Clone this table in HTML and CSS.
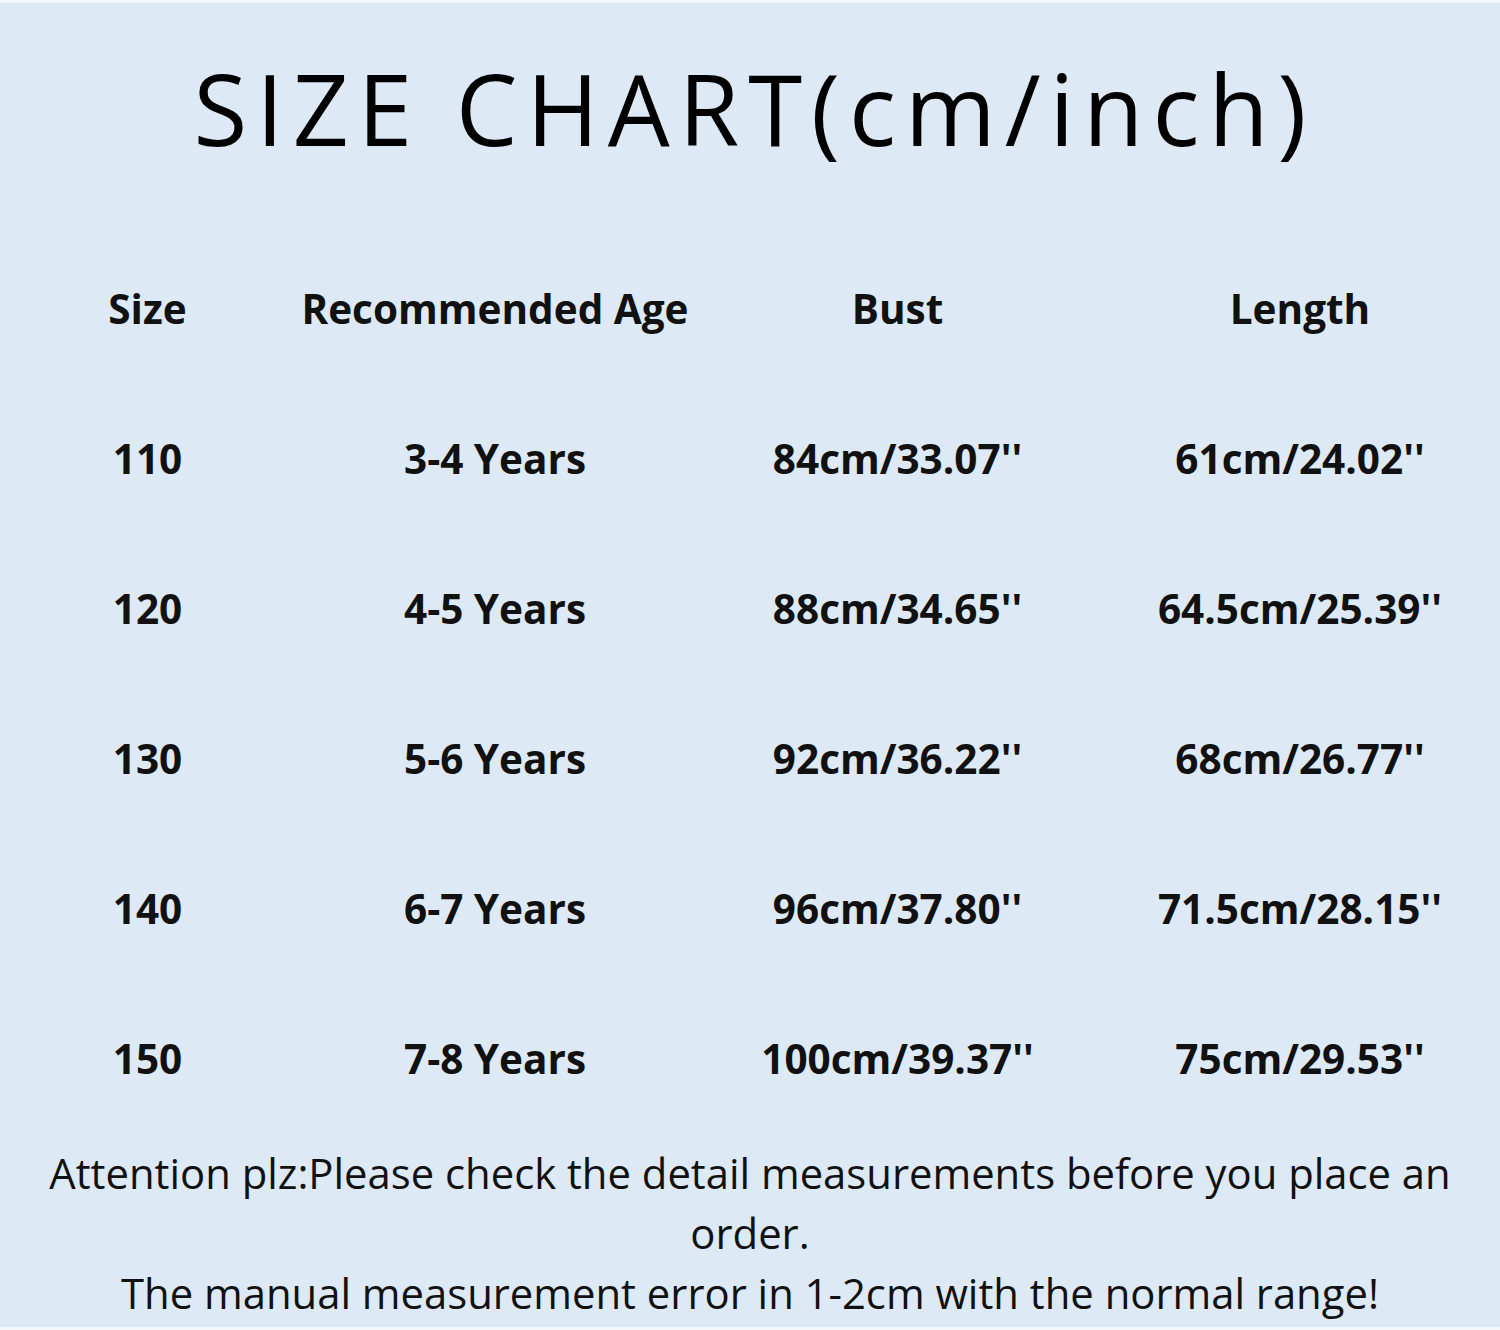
FILE: index.html
```html
<!DOCTYPE html>
<html>
<head>
<meta charset="utf-8">
<link rel="stylesheet" href="styles.css">
</head>
<body>
<div class="sheet">
  <h1 class="title">SIZE CHART(cm/inch)</h1>
  <div class="chart">
    <div class="row head">
      <div class="cell">Size</div>
      <div class="cell">Recommended Age</div>
      <div class="cell">Bust</div>
      <div class="cell">Length</div>
    </div>
    <div class="row">
      <div class="cell">110</div>
      <div class="cell">3-4 Years</div>
      <div class="cell">84cm/33.07''</div>
      <div class="cell">61cm/24.02''</div>
    </div>
    <div class="row">
      <div class="cell">120</div>
      <div class="cell">4-5 Years</div>
      <div class="cell">88cm/34.65''</div>
      <div class="cell">64.5cm/25.39''</div>
    </div>
    <div class="row">
      <div class="cell">130</div>
      <div class="cell">5-6 Years</div>
      <div class="cell">92cm/36.22''</div>
      <div class="cell">68cm/26.77''</div>
    </div>
    <div class="row">
      <div class="cell">140</div>
      <div class="cell">6-7 Years</div>
      <div class="cell">96cm/37.80''</div>
      <div class="cell">71.5cm/28.15''</div>
    </div>
    <div class="row">
      <div class="cell">150</div>
      <div class="cell">7-8 Years</div>
      <div class="cell">100cm/39.37''</div>
      <div class="cell">75cm/29.53''</div>
    </div>
  </div>
  <p class="note">Attention plz:Please check the detail measurements before you place an order.<br>The manual measurement error in 1-2cm with the normal range!</p>
</div>
</body>
</html>
```

FILE: styles.css
```css
html, body {
  margin: 0;
  padding: 0;
  background: #f4f7fa;
}
.sheet {
  width: 1500px;
  height: 1324px;
  margin-top: 3px;
  background: #dde9f5;
  box-sizing: border-box;
  overflow: hidden;
  color: #111;
}
.title {
  margin: 0;
  padding: 40px 0 0 9px;
  height: 170px;
  box-sizing: border-box;
  text-align: center;
  font-family: "Open Sans", "DejaVu Sans", sans-serif;
  font-weight: 400;
  font-size: 98px;
  line-height: 130px;
  letter-spacing: 9px;
  color: #000;
}
.chart {
  display: flex;
  flex-direction: column;
  margin-top: 61px;
}
.row {
  display: grid;
  grid-template-columns: 295px 400px 405px 400px;
  height: 150px;
  align-items: center;
}
.cell {
  text-align: center;
  font-family: "Open Sans", "Noto Sans", sans-serif;
  font-weight: 700;
  font-size: 40.5px;
  line-height: 50px;
  letter-spacing: 0;
}
.note {
  margin: 9px 0 0 0;
  text-align: center;
  font-family: "Open Sans", "Noto Sans", sans-serif;
  font-weight: 400;
  font-size: 41.8px;
  line-height: 60px;
  padding: 0 30px;
}
```
